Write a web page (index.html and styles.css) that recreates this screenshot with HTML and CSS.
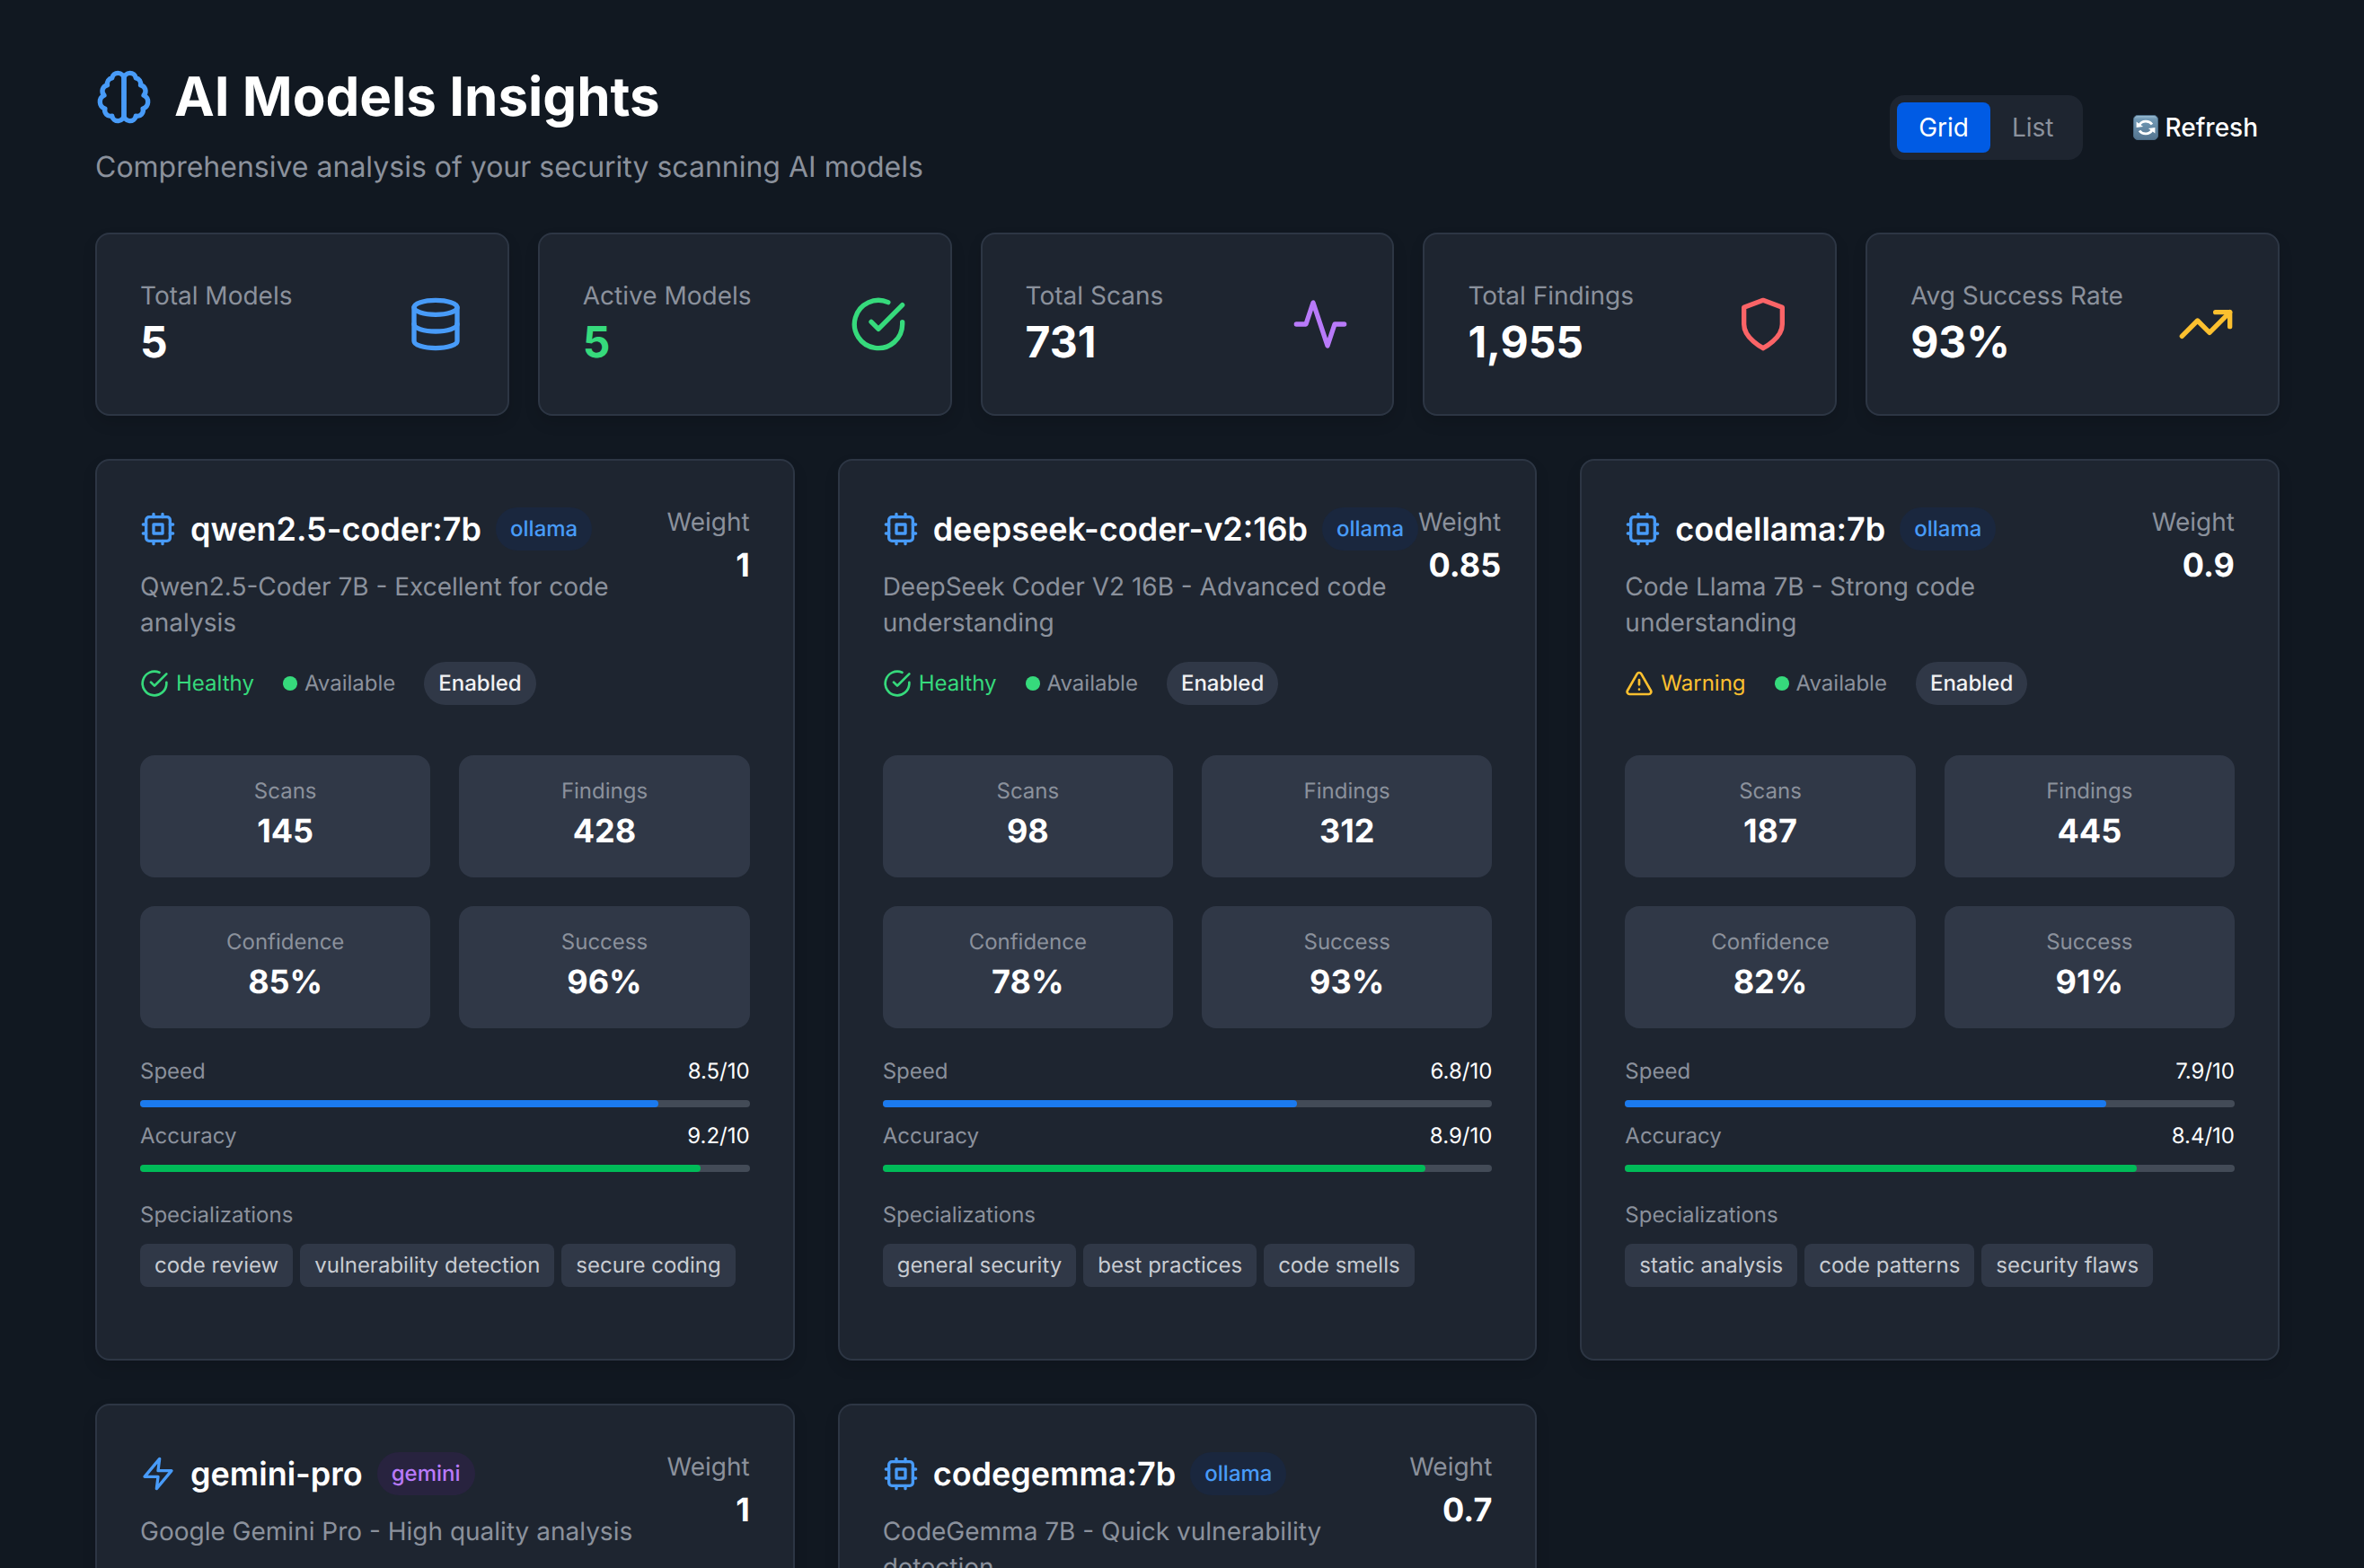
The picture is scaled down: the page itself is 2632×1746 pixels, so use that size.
FILE: index.html
```
<!DOCTYPE html>
<html lang="en">
<head>
<meta charset="utf-8">
<meta name="viewport" content="width=device-width, initial-scale=1">
<title>AI Models Insights</title>
<link rel="stylesheet" href="styles.css">
</head>
<body>
<svg class="sprite" aria-hidden="true">
  <symbol id="i-cpu" viewBox="0 0 24 24"><rect x="4" y="4" width="16" height="16" rx="2"/><rect x="9" y="9" width="6" height="6"/><path d="M15 2v2M15 20v2M2 15h2M2 9h2M20 15h2M20 9h2M9 2v2M9 20v2"/></symbol>
  <symbol id="i-check" viewBox="0 0 24 24"><path d="M22 11.08V12a10 10 0 1 1-5.93-9.14"/><path d="m9 11 3 3L22 4"/></symbol>
  <symbol id="i-warn" viewBox="0 0 24 24"><path d="m21.73 18-8-14a2 2 0 0 0-3.48 0l-8 14A2 2 0 0 0 4 21h16a2 2 0 0 0 1.73-3Z"/><path d="M12 9v4M12 17h.01"/></symbol>
  <symbol id="i-zap" viewBox="0 0 24 24"><path d="M13 2 3 14h9l-1 8 10-12h-9l1-8z"/></symbol>
</svg>
<main class="page">
  <header class="page-header">
    <div>
      <h1 class="page-title">
        <svg class="icon icon-xl blue" viewBox="0 0 24 24" aria-hidden="true"><path d="M9.5 2A2.5 2.5 0 0 1 12 4.5v15a2.5 2.5 0 0 1-4.96.44 2.5 2.5 0 0 1-2.96-3.08 3 3 0 0 1-.34-5.58 2.5 2.5 0 0 1 1.32-4.24 2.5 2.5 0 0 1 1.98-3A2.5 2.5 0 0 1 9.5 2Z"/><path d="M14.5 2A2.5 2.5 0 0 0 12 4.5v15a2.5 2.5 0 0 0 4.96.44 2.5 2.5 0 0 0 2.96-3.08 3 3 0 0 0 .34-5.58 2.5 2.5 0 0 0-1.32-4.24 2.5 2.5 0 0 0-1.98-3A2.5 2.5 0 0 0 14.5 2Z"/></svg>
        AI Models Insights
      </h1>
      <p class="page-subtitle">Comprehensive analysis of your security scanning AI models</p>
    </div>
    <div class="actions">
      <div class="toggle" role="group" aria-label="View">
        <button type="button" class="toggle-btn active" aria-pressed="true">Grid</button>
        <button type="button" class="toggle-btn" aria-pressed="false">List</button>
      </div>
      <button type="button" class="refresh">
        <svg class="refresh-icon" viewBox="0 0 28 28" aria-hidden="true">
          <defs><linearGradient id="tile" x1="0" y1="0" x2="0" y2="1"><stop offset="0" stop-color="#9fc0d6"/><stop offset=".15" stop-color="#7299b5"/><stop offset="1" stop-color="#54748f"/></linearGradient></defs>
          <rect x="0.5" y="0.5" width="27" height="27" rx="4.500" fill="url(#tile)" stroke="#4d6d88"/>
          <path d="M7 11A8 7 0 0 1 21 10.500M21 17A8 7 0 0 1 7 17.500" fill="none" stroke="#fff" stroke-width="2.800"/>
          <path d="M3.600 7.500v6.500l7.500-1zM24.400 20.500V14l-7.500 1z" fill="#fff"/>
        </svg>
        Refresh
      </button>
    </div>
  </header>

  <section class="stats" aria-label="Summary">
    <div class="card stat">
      <div><div class="label">Total Models</div><div class="stat-value">5</div></div>
      <svg class="icon icon-xl blue" viewBox="0 0 24 24" aria-hidden="true"><ellipse cx="12" cy="5" rx="9" ry="3"/><path d="M3 5v14a9 3 0 0 0 18 0V5"/><path d="M3 12a9 3 0 0 0 18 0"/></svg>
    </div>
    <div class="card stat">
      <div><div class="label">Active Models</div><div class="stat-value green">5</div></div>
      <svg class="icon icon-xl green" aria-hidden="true"><use href="#i-check"/></svg>
    </div>
    <div class="card stat">
      <div><div class="label">Total Scans</div><div class="stat-value">731</div></div>
      <svg class="icon icon-xl purple" viewBox="0 0 24 24" aria-hidden="true"><path d="M22 12h-4l-3 9L9 3l-3 9H2"/></svg>
    </div>
    <div class="card stat">
      <div><div class="label">Total Findings</div><div class="stat-value">1,955</div></div>
      <svg class="icon icon-xl red" viewBox="0 0 24 24" aria-hidden="true"><path d="M12 22s8-4 8-10V5l-8-3-8 3v7c0 6 8 10 8 10"/></svg>
    </div>
    <div class="card stat">
      <div><div class="label">Avg Success Rate</div><div class="stat-value">93%</div></div>
      <svg class="icon icon-xl yellow" viewBox="0 0 24 24" aria-hidden="true"><path d="m22 7-8.500 8.500-5-5L2 17"/><path d="M16 7h6v6"/></svg>
    </div>
  </section>

  <section class="models" aria-label="Models">
    <article class="card model">
      <div class="model-head">
        <div class="model-main">
          <div class="model-title"><svg class="icon icon-lg blue" aria-hidden="true"><use href="#i-cpu"/></svg><h2 class="model-name">qwen2.5-coder:7b</h2><span class="badge badge-ollama">ollama</span></div>
          <p class="desc">Qwen2.5-Coder 7B - Excellent for code analysis</p>
          <div class="status">
            <span class="health green"><svg class="icon icon-md" aria-hidden="true"><use href="#i-check"/></svg>Healthy</span>
            <span class="health"><i class="dot"></i>Available</span>
            <span class="badge badge-enabled">Enabled</span>
          </div>
        </div>
        <div class="weight"><div class="label">Weight</div><div class="number">1</div></div>
      </div>
      <div class="metrics">
        <div class="metric"><div class="metric-label">Scans</div><div class="number">145</div></div>
        <div class="metric"><div class="metric-label">Findings</div><div class="number">428</div></div>
        <div class="metric"><div class="metric-label">Confidence</div><div class="number">85%</div></div>
        <div class="metric"><div class="metric-label">Success</div><div class="number">96%</div></div>
      </div>
      <div class="scores">
        <div class="score"><div class="score-row"><span>Speed</span><span class="score-value">8.5/10</span></div><div class="track"><div class="fill fill-speed" style="width:85%"></div></div></div>
        <div class="score"><div class="score-row"><span>Accuracy</span><span class="score-value">9.2/10</span></div><div class="track"><div class="fill fill-accuracy" style="width:92%"></div></div></div>
      </div>
      <div class="specs">
        <h3 class="specs-title">Specializations</h3>
        <div class="chips"><span class="chip">code review</span><span class="chip">vulnerability detection</span><span class="chip">secure coding</span></div>
      </div>
    </article>

    <article class="card model">
      <div class="model-head">
        <div class="model-main">
          <div class="model-title"><svg class="icon icon-lg blue" aria-hidden="true"><use href="#i-cpu"/></svg><h2 class="model-name">deepseek-coder-v2:16b</h2><span class="badge badge-ollama">ollama</span></div>
          <p class="desc">DeepSeek Coder V2 16B - Advanced code understanding</p>
          <div class="status">
            <span class="health green"><svg class="icon icon-md" aria-hidden="true"><use href="#i-check"/></svg>Healthy</span>
            <span class="health"><i class="dot"></i>Available</span>
            <span class="badge badge-enabled">Enabled</span>
          </div>
        </div>
        <div class="weight"><div class="label">Weight</div><div class="number">0.85</div></div>
      </div>
      <div class="metrics">
        <div class="metric"><div class="metric-label">Scans</div><div class="number">98</div></div>
        <div class="metric"><div class="metric-label">Findings</div><div class="number">312</div></div>
        <div class="metric"><div class="metric-label">Confidence</div><div class="number">78%</div></div>
        <div class="metric"><div class="metric-label">Success</div><div class="number">93%</div></div>
      </div>
      <div class="scores">
        <div class="score"><div class="score-row"><span>Speed</span><span class="score-value">6.8/10</span></div><div class="track"><div class="fill fill-speed" style="width:68%"></div></div></div>
        <div class="score"><div class="score-row"><span>Accuracy</span><span class="score-value">8.9/10</span></div><div class="track"><div class="fill fill-accuracy" style="width:89%"></div></div></div>
      </div>
      <div class="specs">
        <h3 class="specs-title">Specializations</h3>
        <div class="chips"><span class="chip">general security</span><span class="chip">best practices</span><span class="chip">code smells</span></div>
      </div>
    </article>

    <article class="card model">
      <div class="model-head">
        <div class="model-main">
          <div class="model-title"><svg class="icon icon-lg blue" aria-hidden="true"><use href="#i-cpu"/></svg><h2 class="model-name">codellama:7b</h2><span class="badge badge-ollama">ollama</span></div>
          <p class="desc">Code Llama 7B - Strong code understanding</p>
          <div class="status">
            <span class="health yellow"><svg class="icon icon-md" aria-hidden="true"><use href="#i-warn"/></svg>Warning</span>
            <span class="health"><i class="dot"></i>Available</span>
            <span class="badge badge-enabled">Enabled</span>
          </div>
        </div>
        <div class="weight"><div class="label">Weight</div><div class="number">0.9</div></div>
      </div>
      <div class="metrics">
        <div class="metric"><div class="metric-label">Scans</div><div class="number">187</div></div>
        <div class="metric"><div class="metric-label">Findings</div><div class="number">445</div></div>
        <div class="metric"><div class="metric-label">Confidence</div><div class="number">82%</div></div>
        <div class="metric"><div class="metric-label">Success</div><div class="number">91%</div></div>
      </div>
      <div class="scores">
        <div class="score"><div class="score-row"><span>Speed</span><span class="score-value">7.9/10</span></div><div class="track"><div class="fill fill-speed" style="width:79%"></div></div></div>
        <div class="score"><div class="score-row"><span>Accuracy</span><span class="score-value">8.4/10</span></div><div class="track"><div class="fill fill-accuracy" style="width:84%"></div></div></div>
      </div>
      <div class="specs">
        <h3 class="specs-title">Specializations</h3>
        <div class="chips"><span class="chip">static analysis</span><span class="chip">code patterns</span><span class="chip">security flaws</span></div>
      </div>
    </article>

    <article class="card model">
      <div class="model-head">
        <div class="model-main">
          <div class="model-title"><svg class="icon icon-lg blue" aria-hidden="true"><use href="#i-zap"/></svg><h2 class="model-name">gemini-pro</h2><span class="badge badge-gemini">gemini</span></div>
          <p class="desc">Google Gemini Pro - High quality analysis</p>
        </div>
        <div class="weight"><div class="label">Weight</div><div class="number">1</div></div>
      </div>
    </article>

    <article class="card model">
      <div class="model-head">
        <div class="model-main">
          <div class="model-title"><svg class="icon icon-lg blue" aria-hidden="true"><use href="#i-cpu"/></svg><h2 class="model-name">codegemma:7b</h2><span class="badge badge-ollama">ollama</span></div>
          <p class="desc">CodeGemma 7B - Quick vulnerability detection</p>
        </div>
        <div class="weight"><div class="label">Weight</div><div class="number">0.7</div></div>
      </div>
    </article>
  </section>
</main>
</body>
</html>
```
FILE: styles.css
```
:root {
  --bg: #111821;
  --card: #1e2530;
  --border: #2d3644;
  --raised: #303847;
  --track: #434b57;
  --text: #ffffff;
  --muted: #8b919c;
  --blue: #489bf8;
  --green: #36da7c;
  --purple: #b87af9;
  --red: #fb6467;
  --yellow: #fcc02f;
}

* { box-sizing: border-box; }

body, h1, h2, h3, p { margin: 0; font-weight: inherit; }

body {
  background: var(--bg);
  color: var(--text);
  font-family: Inter, "Liberation Sans", sans-serif;
  font-size: 28px;
  line-height: 40px;
  font-optical-sizing: none;
  text-rendering: geometricPrecision;
  -webkit-font-smoothing: antialiased;
}

button { font: inherit; border: 0; background: none; color: inherit; cursor: pointer; }

.sprite { display: none; }

.page {
  height: 100vh;
  overflow-y: auto;
  scrollbar-width: none;
  padding: 72px 94px 48px 106px;
}

.icon {
  flex: none;
  fill: none;
  stroke: currentColor;
  stroke-width: 2;
  stroke-linecap: round;
  stroke-linejoin: round;
}
.icon-xl { width: 64px; height: 64px; }
.icon-lg { width: 40px; height: 40px; }
.icon-md { width: 32px; height: 32px; }

.blue { color: var(--blue); }
.green { color: var(--green); }
.purple { color: var(--purple); }
.red { color: var(--red); }
.yellow { color: var(--yellow); }

/* Header */
.page-header {
  display: flex;
  align-items: center;
  justify-content: space-between;
  margin-bottom: 48px;
}
.page-title {
  display: flex;
  align-items: center;
  gap: 24px;
  font-size: 60px;
  line-height: 72px;
  font-weight: 700;
}
.page-subtitle {
  margin-top: 16px;
  font-size: 32px;
  line-height: 51px;
  color: var(--muted);
}
.actions { display: flex; align-items: center; gap: 32px; }
.toggle {
  display: flex;
  padding: 8px;
  border-radius: 16px;
  background: var(--card);
}
.toggle-btn {
  padding: 8px 24px;
  border-radius: 8px;
  color: var(--muted);
}
.toggle-btn.active { background: #005be4; color: var(--text); }
.refresh {
  display: flex;
  align-items: center;
  gap: 8px;
  padding: 16px 24px;
  font-weight: 500;
}
.refresh-icon { width: 28px; height: 28px; }

/* Cards */
.card {
  border: 2px solid var(--border);
  border-radius: 16px;
  background: var(--card);
  padding: 48px;
  box-shadow: 0 8px 16px rgba(0, 0, 0, 0.12);
}
.label { color: var(--muted); }

.stats {
  display: grid;
  grid-template-columns: repeat(5, 1fr);
  gap: 32px;
  margin-bottom: 48px;
}
.stat { display: flex; align-items: center; justify-content: space-between; }
.stat-value { font-size: 48px; line-height: 64px; font-weight: 700; }

.models {
  display: grid;
  grid-template-columns: repeat(3, 1fr);
  grid-auto-rows: 1fr;
  gap: 48px;
}
.model { padding-bottom: 80px; min-width: 0; }
.model-head { display: flex; justify-content: space-between; align-items: flex-start; }
.model-main { flex: 1; }
.model-title { display: flex; align-items: center; gap: 16px; }
.model-name { font-size: 36px; line-height: 56px; font-weight: 600; white-space: nowrap; }
.desc { margin-top: 16px; padding-right: 16px; color: var(--muted); }
.status {
  display: flex;
  align-items: center;
  gap: 32px;
  margin-top: 24px;
  color: var(--muted);
  font-size: 24px;
  line-height: 32px;
}
.health { display: flex; align-items: center; gap: 8px; }
.health.green { color: var(--green); }
.health.yellow { color: var(--yellow); }
.dot { width: 16px; height: 16px; border-radius: 50%; background: var(--green); }

.badge {
  padding: 8px 16px;
  border-radius: 24px;
  font-size: 24px;
  line-height: 32px;
  font-weight: 500;
}
.badge-ollama { background: #1a273e; color: var(--blue); }
.badge-gemini { background: #28233f; color: var(--purple); }
.badge-enabled { background: var(--raised); color: #f0f1f3; }

.weight { text-align: right; }
.number { font-size: 36px; line-height: 56px; font-weight: 700; }

.metrics {
  display: grid;
  grid-template-columns: 1fr 1fr;
  gap: 32px;
  margin-top: 56px;
}
.metric {
  padding: 24px;
  border-radius: 16px;
  background: var(--raised);
  text-align: center;
}
.metric-label, .score-row, .specs-title {
  font-size: 24px;
  line-height: 32px;
  color: var(--muted);
}

.scores { display: grid; gap: 16px; margin-top: 32px; }
.score-row { display: flex; justify-content: space-between; }
.score-value { color: var(--text); }
.track {
  margin-top: 16px;
  height: 8px;
  border-radius: 4px;
  background: var(--track);
}
.fill { height: 100%; border-radius: 4px; }
.fill-speed { background: #1b7aee; }
.fill-accuracy { background: #00bb58; }

.specs { margin-top: 32px; }
.chips { display: flex; flex-wrap: wrap; gap: 8px; margin-top: 16px; }
.chip {
  padding: 8px 16px;
  border-radius: 8px;
  background: var(--raised);
  color: #c8ccd2;
  font-size: 24px;
  line-height: 32px;
}
```
